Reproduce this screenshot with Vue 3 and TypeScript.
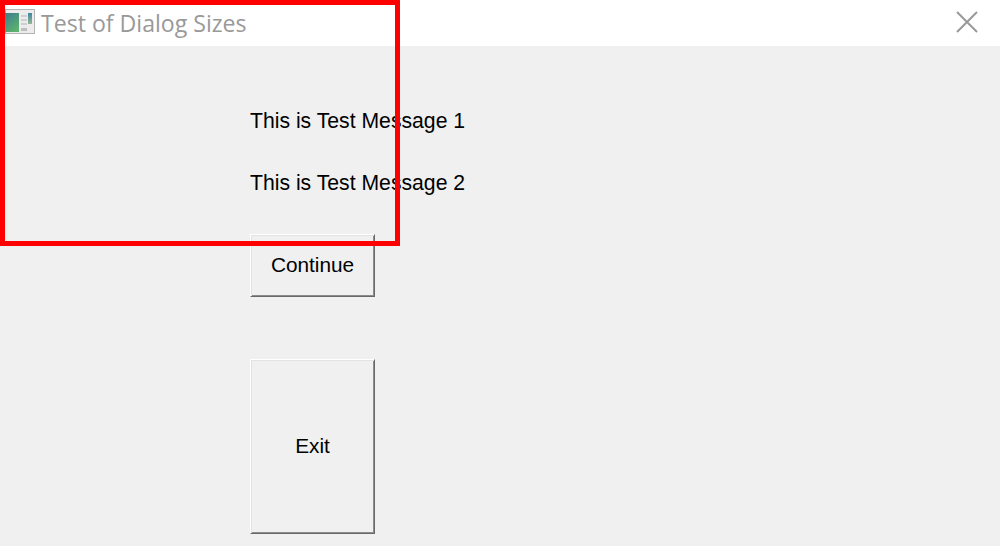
<template>
  <div class="dialog">
    <div class="title-bar">
      <div class="title-left">
        <svg class="app-icon" width="30" height="25" viewBox="0 0 30 25">
          <defs>
            <linearGradient id="screen" x1="0" y1="0" x2="0.6" y2="1">
              <stop offset="0" stop-color="#3c7d8e" />
              <stop offset="1" stop-color="#5cb070" />
            </linearGradient>
            <linearGradient id="side" x1="0" y1="0" x2="0" y2="1">
              <stop offset="0" stop-color="#3f86a0" />
              <stop offset="1" stop-color="#8fb995" />
            </linearGradient>
          </defs>
          <rect x="0" y="0" width="30" height="25" fill="#b4b4b4" />
          <rect x="1" y="1" width="28" height="23" fill="#ececec" />
          <rect x="0" y="4" width="14" height="19" fill="url(#screen)" />
          <rect x="16" y="6" width="6" height="2" fill="#cfcfcf" />
          <rect x="16" y="10" width="6" height="2" fill="#cfcfcf" />
          <rect x="16" y="14" width="6" height="2" fill="#cfcfcf" />
          <rect x="16" y="19" width="6" height="3" fill="#bdbdbd" />
          <rect x="23" y="4" width="4" height="11" fill="url(#side)" />
        </svg>
        <span class="title-text">{{ title }}</span>
      </div>
      <svg class="close-icon" width="22" height="22" viewBox="0 0 22 22">
        <path d="M1 1 L21 21 M21 1 L1 21" stroke="#999" stroke-width="2" fill="none" />
      </svg>
    </div>

    <div class="content">
      <p class="message first">This is Test Message 1</p>
      <p class="message second">This is Test Message 2</p>
      <button class="win-btn continue-btn">Continue</button>
      <button class="win-btn exit-btn">Exit</button>
    </div>

    <!-- annotation drawn over the screenshot -->
    <div class="highlight"></div>
  </div>
</template>

<script setup lang="ts">
const title = 'Test of Dialog Sizes'
</script>

<style scoped>
.dialog {
  position: relative;
  display: flex;
  flex-direction: column;
  width: 1000px;
  height: 546px;
  overflow: hidden;
  background-color: #f0f0f0;
  font-family: 'Liberation Sans', Arial, sans-serif;
}

.title-bar {
  display: flex;
  align-items: center;
  justify-content: space-between;
  height: 46px;
  padding: 0 22px 0 5px;
  box-sizing: border-box;
  background-color: #ffffff;
}

.title-left {
  display: flex;
  align-items: center;
  gap: 6px;
}

.app-icon {
  margin-top: -3px;
}

.title-text {
  font-family: 'Open Sans', 'Noto Sans', sans-serif;
  font-size: 23.1px;
  color: #999999;
}

.close-icon {
  margin-top: -2px;
}

.content {
  display: flex;
  flex-direction: column;
  align-items: flex-start;
  padding: 63px 0 0 250px;
}

.message {
  margin: 0;
  height: 24px;
  line-height: 24px;
  font-size: 21.2px;
  color: #000000;
}

.second {
  margin-top: 38px;
}

.win-btn {
  display: block;
  width: 125px;
  padding: 0 0 2px;
  box-sizing: border-box;
  border: 1px solid;
  border-color: #ffffff #696969 #696969 #ffffff;
  box-shadow: inset 1px 1px 0 #e3e3e3, inset -1px -1px 0 #8c8c8c;
  background-color: #f0f0f0;
  font-family: 'Liberation Sans', Arial, sans-serif;
  font-size: 20.8px;
  color: #000000;
}

.continue-btn {
  margin-top: 39px;
  height: 63px;
}

.exit-btn {
  margin-top: 62px;
  height: 175px;
}

.highlight {
  position: absolute;
  top: 0;
  left: 0;
  width: 400px;
  height: 246px;
  box-sizing: border-box;
  border: 5px solid #ff0000;
  pointer-events: none;
}
</style>
